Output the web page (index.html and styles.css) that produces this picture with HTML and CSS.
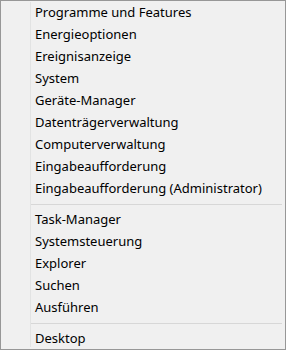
FILE: index.html
```html
<!DOCTYPE html>
<html lang="de">
<head>
    <meta charset="UTF-8">
    <title>Schnellzugriffsmenü</title>
    <link rel="stylesheet" href="styles.css">
</head>
<body>
    <div class="menu">
        <ul class="menu-list">
            <li class="menu-item">Programme und Features</li>
            <li class="menu-item">Energieoptionen</li>
            <li class="menu-item">Ereignisanzeige</li>
            <li class="menu-item">System</li>
            <li class="menu-item">Geräte-Manager</li>
            <li class="menu-item">Datenträgerverwaltung</li>
            <li class="menu-item">Computerverwaltung</li>
            <li class="menu-item">Eingabeaufforderung</li>
            <li class="menu-item">Eingabeaufforderung (Administrator)</li>
            <li class="separator"></li>
            <li class="menu-item">Task-Manager</li>
            <li class="menu-item">Systemsteuerung</li>
            <li class="menu-item">Explorer</li>
            <li class="menu-item">Suchen</li>
            <li class="menu-item">Ausführen</li>
            <li class="separator"></li>
            <li class="menu-item">Desktop</li>
        </ul>
    </div>
</body>
</html>
```

FILE: styles.css
```css
body {
    margin: 0;
    font-family: "Noto Sans", "DejaVu Sans", sans-serif;
    font-size: 13px;
    color: #000;
}
.menu {
    width: 286px;
    height: 350px;
    box-sizing: border-box;
    border: 1px solid #979797;
    background-color: #f0f0f0;
    padding: 1px 3px 2px 29px;
}
.menu-list {
    list-style: none;
    margin: 0;
    padding: 0;
    height: 100%;
    border-left: 1px solid #e2e3e3;
}
.menu-item {
    height: 22px;
    line-height: 21px;
    padding-left: 4px;
    white-space: nowrap;
}
.separator {
    height: 1px;
    margin: 4px 0 4px 0;
    background-color: #d7d7d7;
}
```
